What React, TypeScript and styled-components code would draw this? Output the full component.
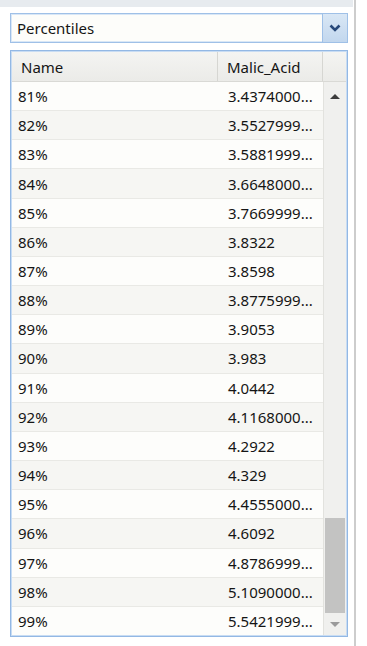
import React from 'react';
import styled, { createGlobalStyle } from 'styled-components';

interface PercentileRow {
  name: string;
  value: string;
}

const rows: PercentileRow[] = [
  { name: '81%', value: '3.4374000...' },
  { name: '82%', value: '3.5527999...' },
  { name: '83%', value: '3.5881999...' },
  { name: '84%', value: '3.6648000...' },
  { name: '85%', value: '3.7669999...' },
  { name: '86%', value: '3.8322' },
  { name: '87%', value: '3.8598' },
  { name: '88%', value: '3.8775999...' },
  { name: '89%', value: '3.9053' },
  { name: '90%', value: '3.983' },
  { name: '91%', value: '4.0442' },
  { name: '92%', value: '4.1168000...' },
  { name: '93%', value: '4.2922' },
  { name: '94%', value: '4.329' },
  { name: '95%', value: '4.4555000...' },
  { name: '96%', value: '4.6092' },
  { name: '97%', value: '4.8786999...' },
  { name: '98%', value: '5.1090000...' },
  { name: '99%', value: '5.5421999...' },
];

function App() {
  return (
    <>
      <GlobalStyle />
      <Page>
        <Panel>
          <TopStrip />
          <Content>
            <Combo>
              <ComboText>Percentiles</ComboText>
              <ComboButton>
                <svg width="12" height="8" viewBox="0 0 12 8">
                  <path d="M1.5 1.5 L6 6 L10.5 1.5" fill="none" stroke="#28497a" strokeWidth="2.6" />
                </svg>
              </ComboButton>
            </Combo>

            <Table>
              <HeaderRow>
                <HeaderCell>Name</HeaderCell>
                <HeaderCell>Malic_Acid</HeaderCell>
                <HeaderCell />
              </HeaderRow>
              <Body>
                <Rows>
                  {rows.map((row, index) => (
                    <Row key={row.name} $odd={index % 2 === 1}>
                      <Cell>{row.name}</Cell>
                      <Cell>{row.value}</Cell>
                    </Row>
                  ))}
                </Rows>
                <ScrollBar>
                  <ArrowBox $height={29}>
                    <Arrow $up color="#3c3c3c" />
                  </ArrowBox>
                  <Track>
                    <Thumb />
                  </Track>
                  <ArrowBox $height={22}>
                    <Arrow color="#9a9a9a" />
                  </ArrowBox>
                </ScrollBar>
              </Body>
            </Table>
          </Content>
        </Panel>
        <Edge />
      </Page>
    </>
  );
}
export default App;

const GlobalStyle = createGlobalStyle`
  html, body {
    margin: 0;
    padding: 0;
    background: #ffffff;
  }
  body {
    font-family: "Noto Sans", "Liberation Sans", Arial, sans-serif;
    font-size: 15px;
    color: #151515;
  }
`;

const Page = styled.div`
  display: flex;
  flex-direction: row;
  height: 646px;
  overflow: hidden;
`;

const Panel = styled.div`
  width: 353px;
  display: flex;
  flex-direction: column;
`;

const TopStrip = styled.div`
  height: 7px;
  background: #e7ebef;
`;

const Content = styled.div`
  display: flex;
  flex-direction: column;
  gap: 7px;
  padding: 6px 5px 0 10px;
`;

const Combo = styled.div`
  height: 30px;
  box-sizing: border-box;
  display: flex;
  flex-direction: row;
  border: 1px solid #9fc0e7;
  box-shadow: inset 0 0 0 1px #d9e7f6;
  background: #fdfdfa;
`;

const ComboText = styled.div`
  flex: 1;
  display: flex;
  align-items: center;
  padding-left: 6px;
`;

const ComboButton = styled.div`
  width: 24px;
  display: flex;
  align-items: center;
  justify-content: center;
  border-left: 1px solid #9fc0e7;
  border-top-right-radius: 3px;
  background: linear-gradient(#d9e7f5, #c2d7ee);
`;

const Table = styled.div`
  height: 587px;
  box-sizing: border-box;
  display: flex;
  flex-direction: column;
  border: 1px solid #93b8e4;
  box-shadow: inset 0 0 0 1px #c8dcf3;
  background: #fdfdfb;
  overflow: hidden;
`;

const HeaderRow = styled.div`
  height: 29px;
  flex: none;
  display: grid;
  grid-template-columns: 206px 105px 1fr;
  background: linear-gradient(#f4f4f2, #ebebe8);
  border-bottom: 1px solid #d9d9d5;
  margin: 1px 1px 0 1px;
`;

const HeaderCell = styled.div`
  display: flex;
  align-items: center;
  padding-left: 9px;
  border-right: 1px solid #d6d6d2;

  &:last-child {
    border-right: none;
  }
`;

const Body = styled.div`
  flex: 1;
  display: flex;
  flex-direction: row;
  margin: 0 1px 1px 1px;
`;

const Rows = styled.div`
  width: 311px;
  display: flex;
  flex-direction: column;
  border-right: 1px solid #e2e2de;
`;

const Row = styled.div<{ $odd: boolean }>`
  flex: 1;
  box-sizing: border-box;
  display: grid;
  grid-template-columns: 206px 1fr;
  border-bottom: 1px solid #e9e9e5;
  background: ${(p) => (p.$odd ? '#f6f6f3' : '#fdfdfb')};

  &:last-child {
    border-bottom: none;
  }
`;

const Cell = styled.div`
  display: flex;
  align-items: center;
  padding-left: 6px;
  white-space: nowrap;
  overflow: hidden;

  & + & {
    padding-left: 10px;
  }
`;

const ScrollBar = styled.div`
  flex: 1;
  display: flex;
  flex-direction: column;
  background: #f0f0ee;
`;

const ArrowBox = styled.div<{ $height: number }>`
  height: ${(p) => p.$height}px;
  flex: none;
  display: flex;
  align-items: center;
  justify-content: center;
`;

const Arrow = styled.div<{ $up?: boolean; color: string }>`
  width: 0;
  height: 0;
  border-left: 5px solid transparent;
  border-right: 5px solid transparent;
  ${(p) =>
    p.$up ? `border-bottom: 5px solid ${p.color};` : `border-top: 5px solid ${p.color};`}
`;

const Track = styled.div`
  flex: 1;
  display: flex;
  flex-direction: column;
  justify-content: flex-end;
  padding: 0 1px 0 1px;
`;

const Thumb = styled.div`
  height: 95px;
  background: #c3c3c2;
`;

const Edge = styled.div`
  width: 2px;
  margin-left: 1px;
  background: #cdcdcd;
`;
